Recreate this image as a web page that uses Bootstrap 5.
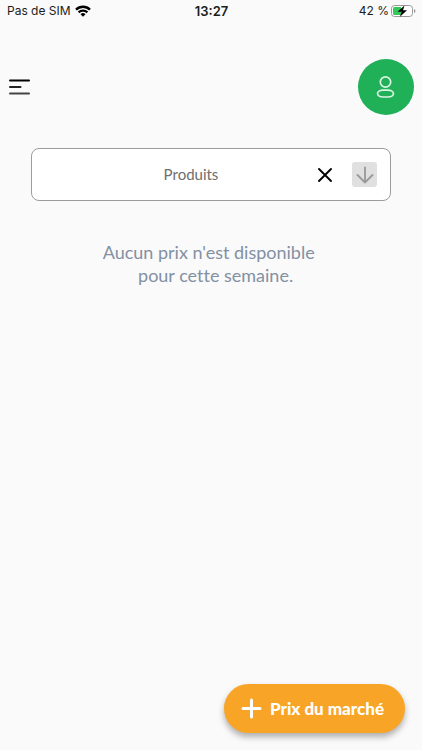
<!DOCTYPE html>
<html lang="fr">
<head>
<meta charset="utf-8">
<meta name="viewport" content="width=device-width, initial-scale=1">
<title>Prix du marché</title>
<link href="https://cdn.jsdelivr.net/npm/bootstrap@5.3.0/dist/css/bootstrap.min.css" rel="stylesheet">
<style>
  body { background: #fafafa; font-family: Lato, "Liberation Sans", sans-serif; font-variant-ligatures: none; }
  svg { display: block; }
  .status-bar { height: 22px; padding: 0 6px 0 7px; font: 400 12px/22px Inter, "Liberation Sans", sans-serif; color: #1c1c1c; }
  .status-side { flex: 1 1 0; }
  .status-time { font-size: 13px; font-weight: 600; }
  .battery-level { margin-right: 2px; }
  .app-header { padding: 37px 8px 0; }
  .avatar { width: 56px; height: 56px; background: #1fb058; }
  .page-main { padding: 33px 31px 0; }
  .product-field { height: 53px; padding: 0 13px; border: 1px solid #9c9c9c; border-radius: 8px; }
  .product-name { font-size: 15px; line-height: 20px; color: #6e6e6e; background: none; outline: 0; padding: 0 0 2px 28px; }
  .clear-btn { margin-left: 8px; }
  .arrow-btn { width: 25px; height: 25px; margin-left: 19px; background: #e0e0e0; border-radius: 3px; }
  .empty-note { margin-top: 40px; font-size: 18px; line-height: 23px; color: #8390a2; }
  .fab-row { padding: 0 17px 17px; }
  .fab { height: 49px; padding: 0 21px 0 17px; gap: 8px; background: #f8a427; color: #fff; font-size: 17px; font-weight: 900; box-shadow: 0 4px 6px rgba(0,0,0,.3); }
  .fab:hover { background: #f8a427; color: #fff; }
</style>
</head>
<body class="d-flex flex-column min-vh-100">
<div class="status-bar d-flex align-items-center">
  <div class="status-side d-flex align-items-center gap-1">
    <span>Pas de SIM</span>
    <svg width="16" height="12" viewBox="0 0 16 12" aria-hidden="true"><g fill="none" stroke="#000" stroke-width="2.3"><path d="M1 4.6a10 10 0 0 1 14 0"/><path d="M3.6 7.4a6.3 6.3 0 0 1 8.8 0"/></g><path d="M8 11.8 5.5 9.3a3.6 3.6 0 0 1 5 0z"/></svg>
  </div>
  <span class="status-time">13:27</span>
  <div class="status-side d-flex align-items-center justify-content-end">
    <span class="battery-level">42 %</span>
    <svg width="25" height="12" viewBox="0 0 25 12" aria-hidden="true"><rect x=".5" y=".5" width="21" height="11" rx="3" fill="#fff" stroke="#999"/><path d="M3.500 2H10v8H3.500a1.500 1.500 0 0 1-1.500-1.500v-5A1.500 1.500 0 0 1 3.500 2z" fill="#35c759"/><path d="M23 4v4q1.500-.5 1.500-2T23 4z" fill="#999"/><path d="M13.500.5 6.500 6.800h4L9 11.700l7-6.400h-4z" fill="#000"/></svg>
  </div>
</div>

<header class="app-header d-flex align-items-center justify-content-between">
  <button type="button" class="btn p-0 border-0" aria-label="Menu">
    <svg width="22" height="18" viewBox="0 0 22 18" fill="none" stroke-width="2" stroke-linecap="round"><path d="M2 2.500h19" stroke="#000"/><path d="M2 9h10.500" stroke="#222"/><path d="M2 15.500h19" stroke="#444"/></svg>
  </button>
  <button type="button" class="avatar btn rounded-circle border-0 p-0 d-flex align-items-center justify-content-center" aria-label="Profil">
    <svg width="20" height="24" viewBox="0 0 20 24" fill="none" stroke="#d9f5e3" stroke-width="1.700"><circle cx="9.500" cy="7" r="5.200"/><rect x="1.500" y="15.200" width="16" height="6.800" rx="5.500" ry="3.400"/></svg>
  </button>
</header>

<main class="page-main flex-grow-1">
  <div class="product-field d-flex align-items-center bg-white">
    <input type="text" class="product-name flex-fill w-100 border-0 text-center" value="Produits" aria-label="Produits">
    <button type="button" class="clear-btn btn border-0 p-0" aria-label="Effacer">
      <svg width="16" height="16" viewBox="0 0 16 16" fill="none" stroke="#000" stroke-width="1.900" stroke-linecap="round"><path d="m2 2 12 12M14 2 2 14"/></svg>
    </button>
    <button type="button" class="arrow-btn btn border-0 p-0 d-flex align-items-center justify-content-center flex-shrink-0" aria-label="Ouvrir la liste">
      <svg width="18" height="18" viewBox="0 0 18 18" fill="none" stroke="#9b9b9b" stroke-width="1.900" stroke-linecap="round" stroke-linejoin="round"><path d="M9 1.500v15M1.500 9 9 16.500 16.500 9"/></svg>
    </button>
  </div>
  <p class="empty-note text-center mb-0">Aucun prix n'est disponible&nbsp;<br>&nbsp;&nbsp;pour cette semaine.</p>
</main>

<div class="fab-row d-flex justify-content-end">
  <button type="button" class="fab btn border-0 rounded-pill d-flex align-items-center">
    <svg width="21" height="21" viewBox="0 0 21 21" fill="none" stroke="#fff" stroke-width="3" stroke-linecap="round" aria-hidden="true"><path d="M10.500 2v17M2 10.500h17"/></svg>
    <span>Prix du marché</span>
  </button>
</div>
<script src="https://cdn.jsdelivr.net/npm/bootstrap@5.3.0/dist/js/bootstrap.bundle.min.js"></script>
</body>
</html>
